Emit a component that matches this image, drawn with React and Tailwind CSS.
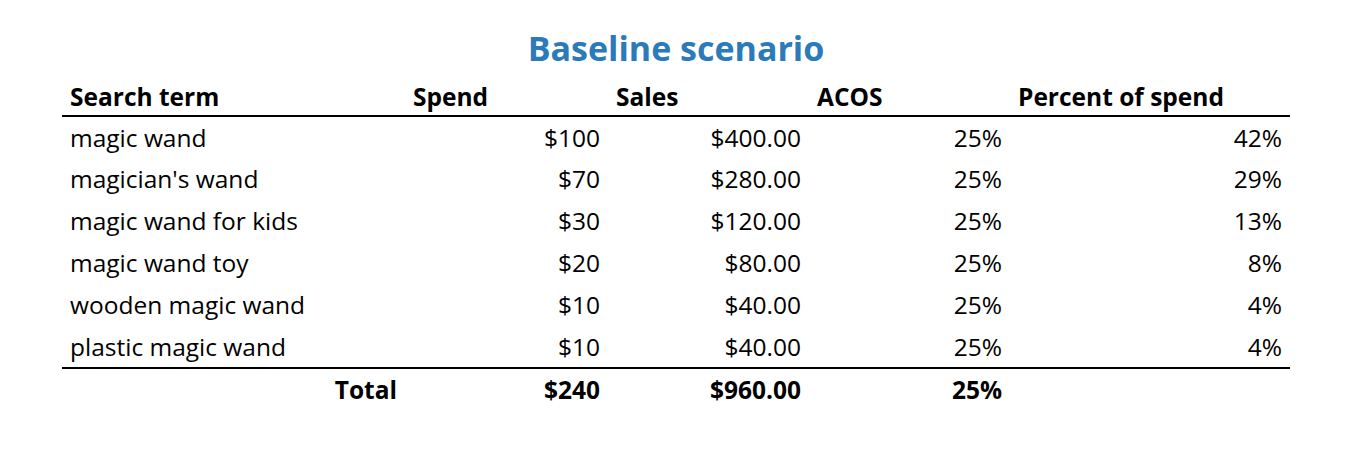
const ROWS = [
  { term: 'magic wand', spend: '$100', sales: '$400.00', acos: '25%', pct: '42%' },
  { term: "magician's wand", spend: '$70', sales: '$280.00', acos: '25%', pct: '29%' },
  { term: 'magic wand for kids', spend: '$30', sales: '$120.00', acos: '25%', pct: '13%' },
  { term: 'magic wand toy', spend: '$20', sales: '$80.00', acos: '25%', pct: '8%' },
  { term: 'wooden magic wand', spend: '$10', sales: '$40.00', acos: '25%', pct: '4%' },
  { term: 'plastic magic wand', spend: '$10', sales: '$40.00', acos: '25%', pct: '4%' },
];

export default function App() {
  return (
    <div className="w-[1352px] h-[474px] bg-white pt-[28px] px-[62px] font-['Open_Sans',sans-serif] text-black">
      <h1 className="text-center text-[34px] leading-[40px] font-bold text-[#2b7bba]">Baseline scenario</h1>
      <table className="w-full border-collapse text-[24.5px] leading-[33px] table-fixed">
        <colgroup>
          <col className="w-[343px]" />
          <col className="w-[203px]" />
          <col className="w-[201px]" />
          <col className="w-[201px]" />
          <col className="w-[280px]" />
        </colgroup>
        <thead>
          <tr className="border-b-2 border-black">
            <th className="text-left px-2 h-[48px] align-bottom pb-[2px] font-bold">Search term</th>
            <th className="text-left px-2 align-bottom pb-[2px] font-bold">Spend</th>
            <th className="text-left px-2 align-bottom pb-[2px] font-bold">Sales</th>
            <th className="text-left px-2 align-bottom pb-[2px] font-bold">ACOS</th>
            <th className="text-left px-2 align-bottom pb-[2px] font-bold">Percent of spend</th>
          </tr>
        </thead>
        <tbody>
          {ROWS.map((r, i) => (
            <tr key={r.term} className={i === ROWS.length - 1 ? 'border-b-2 border-black' : ''}>
              <td className="px-2 h-[42px] align-top pt-[4px]">{r.term}</td>
              <td className="px-2 align-top pt-[4px] text-right">{r.spend}</td>
              <td className="px-2 align-top pt-[4px] text-right">{r.sales}</td>
              <td className="px-2 align-top pt-[4px] text-right">{r.acos}</td>
              <td className="px-2 align-top pt-[4px] text-right">{r.pct}</td>
            </tr>
          ))}
          <tr className="font-bold">
            <td className="px-2 h-[42px] align-top pt-[4px] text-right">Total</td>
            <td className="px-2 align-top pt-[4px] text-right">$240</td>
            <td className="px-2 align-top pt-[4px] text-right">$960.00</td>
            <td className="px-2 align-top pt-[4px] text-right">25%</td>
            <td className="px-2" />
          </tr>
        </tbody>
      </table>
    </div>
  );
}
